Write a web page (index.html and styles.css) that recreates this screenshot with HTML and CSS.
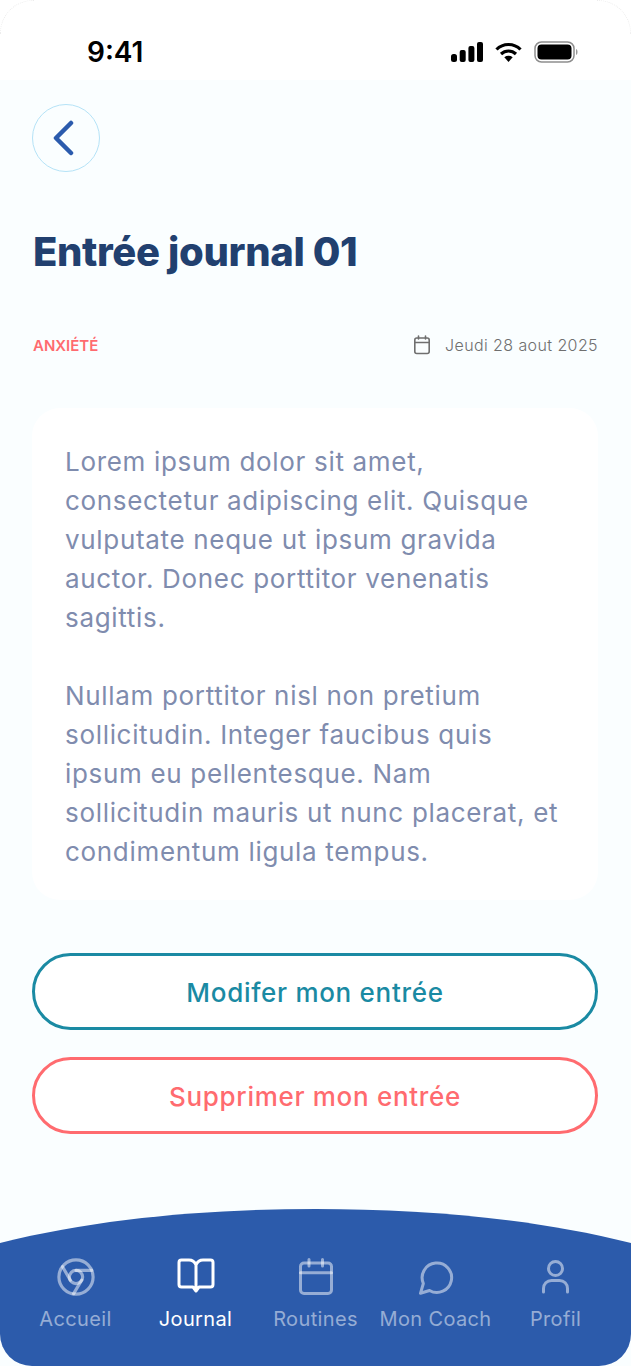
FILE: index.html
```html
<!DOCTYPE html>
<html lang="fr">
<head>
    <meta charset="UTF-8">
    <meta name="viewport" content="width=device-width, initial-scale=1.0">
    <title>Entrée journal 01</title>
    <link rel="stylesheet" href="styles.css">
</head>
<body>
    <div class="phone">
        <div class="status-bar">
            <span class="clock">9:41</span>
            <div class="status-icons">
                <svg width="32" height="20" viewBox="0 0 32 20"><g fill="#000"><rect x="0" y="12" width="6" height="8" rx="2.500"/><rect x="8.700" y="8" width="6" height="12" rx="2"/><rect x="17.400" y="4" width="6" height="16" rx="2"/><rect x="26" y="0" width="6" height="20" rx="2"/></g></svg>
                <svg width="27" height="20" viewBox="0 0 27 20"><path d="M1.500 7.500C8 .8 19 .8 25.500 7.500M6 12c4.300-4 10.700-4 15 0" fill="none" stroke="#000" stroke-width="3.200"/><path d="M9.300 15.200c2.500-1.800 5.900-1.800 8.400 0L13.500 20z" fill="#000"/></svg>
                <svg width="44" height="22" viewBox="0 0 44 22"><rect x="1" y="1" width="39" height="20" rx="6.500" fill="none" stroke="#8e8e8e" stroke-width="1.500"/><rect x="3.500" y="3.500" width="34" height="15" rx="4" fill="#000"/><path d="M42 8c2 .5 2 5.500 0 6z" fill="#999"/></svg>
            </div>
        </div>

        <main class="content">
            <button class="back-button" aria-label="Retour">
                <svg width="24" height="36" viewBox="0 0 24 36"><path d="M20 3L5 18l15 15" fill="none" stroke="#2b5bad" stroke-width="4.500" stroke-linecap="round" stroke-linejoin="round"/></svg>
            </button>

            <h1 class="title">Entrée journal 01</h1>

            <div class="meta">
                <span class="tag">ANXIÉTÉ</span>
                <span class="date">
                    <svg width="18" height="20" viewBox="0 0 18 20"><g fill="none" stroke="#6f6f6f" stroke-width="1.600" stroke-linecap="round"><rect x="1.800" y="3" width="14.400" height="15.500" rx="2"/><path d="M1.800 7.500h14.400M5.500 1v3M12.500 1v3"/></g></svg>
                    Jeudi 28 aout 2025
                </span>
            </div>

            <article class="entry">
                <p>Lorem ipsum dolor sit amet,<br>consectetur adipiscing elit. Quisque<br>vulputate neque ut ipsum gravida<br>auctor. Donec porttitor venenatis<br>sagittis.</p>
                <p>Nullam porttitor nisl non pretium<br>sollicitudin. Integer faucibus quis<br>ipsum eu pellentesque. Nam<br>sollicitudin mauris ut nunc placerat, et<br>condimentum ligula tempus.</p>
            </article>

            <div class="actions">
                <button class="btn btn-edit">Modifer mon entrée</button>
                <button class="btn btn-delete">Supprimer mon entrée</button>
            </div>
        </main>

        <nav class="tabbar">
            <svg class="tabbar-curve" width="631" height="36" viewBox="0 0 631 36" preserveAspectRatio="none"><path d="M0 34C100 9 210 0 316 0s216 9 315 34v2H0z" fill="#2c5bab"/></svg>
            <div class="tabs">
                <a class="tab">
                    <svg width="38" height="38" viewBox="0 0 24 24"><g fill="none" stroke="currentColor" stroke-width="2" stroke-linecap="round"><circle cx="12" cy="12" r="10.800"/><circle cx="12" cy="12" r="4.200"/><path d="M22 7.800H12M3.500 5.500L8.400 14M10.500 22.500L15.600 14"/></g></svg>
                    <span>Accueil</span>
                </a>
                <a class="tab tab-active">
                    <svg width="38" height="38" viewBox="0 0 38 38"><path d="M19 7C17.500 3.500 15 2 12 2H4.500C3 2 2 3 2 4.500v22C2 28 3 29 4.500 29H16l3 4 3-4h11.500c1.500 0 2.500-1 2.500-2.500v-22C36 3 35 2 33.500 2H26c-3 0-5.500 1.500-7 5zM19 7v24" fill="none" stroke="currentColor" stroke-width="3" stroke-linecap="round" stroke-linejoin="round"/></svg>
                    <span>Journal</span>
                </a>
                <a class="tab">
                    <svg width="38" height="38" viewBox="0 0 38 38"><g fill="none" stroke="currentColor" stroke-width="3" stroke-linecap="round"><rect x="3.500" y="5" width="31" height="30.500" rx="3.500"/><path d="M3.500 14.700h31M12 1.500v6.500M25.500 1.500v6.500"/></g></svg>
                    <span>Routines</span>
                </a>
                <a class="tab">
                    <svg width="38" height="38" viewBox="0 0 24 24"><path d="M7.900 20.500A9.300 9.300 0 1 0 4 16.100L2.200 22.300Z" fill="none" stroke="currentColor" stroke-width="1.900" stroke-linejoin="round"/></svg>
                    <span>Mon Coach</span>
                </a>
                <a class="tab">
                    <svg width="38" height="38" viewBox="0 0 38 38"><g fill="none" stroke="currentColor" stroke-width="3" stroke-linecap="round"><circle cx="18.500" cy="10.500" r="7"/><path d="M6.500 34v-3.500c0-4.500 3.500-8 8-8h8c4.500 0 8 3.500 8 8V34"/></g></svg>
                    <span>Profil</span>
                </a>
            </div>
        </nav>
    </div>
</body>
</html>
```

FILE: styles.css
```css
* {
    box-sizing: border-box;
}

body {
    margin: 0;
    background-color: #fff;
    font-family: Inter, "Open Sans", Arial, sans-serif;
}

.phone {
    position: relative;
    display: flex;
    flex-direction: column;
    width: 631px;
    height: 1366px;
    overflow: hidden;
    background-color: #fafeff;
}

/* faint dotted edge of the device at the top corners */
.phone::before,
.phone::after {
    content: "";
    position: absolute;
    top: 0;
    width: 33px;
    height: 33px;
    border-top: 1px dotted #ececec;
}

.phone::before {
    left: 0;
    border-left: 1px dotted #ececec;
    border-top-left-radius: 33px;
}

.phone::after {
    right: 0;
    border-right: 1px dotted #ececec;
    border-top-right-radius: 33px;
}

.status-bar {
    display: flex;
    justify-content: space-between;
    align-items: center;
    height: 80px;
    padding: 24px 53px 0 87px;
    background-color: #fff;
}

.clock {
    font-size: 28px;
    font-weight: 600;
    color: #000;
}

.status-icons {
    display: flex;
    align-items: center;
    gap: 12px;
}

.content {
    flex: 1;
    padding: 24px 33px 0 32px;
}

.back-button {
    display: flex;
    justify-content: center;
    align-items: center;
    width: 68px;
    height: 68px;
    padding: 0 6px 0 0;
    background: none;
    border: 1px solid #b5e3f7;
    border-radius: 50%;
}

.title {
    margin: 53px 0 0 1px;
    font-size: 40px;
    line-height: 54px;
    font-weight: 800;
    color: #21406f;
    letter-spacing: -0.35px;
}

.meta {
    display: flex;
    justify-content: space-between;
    align-items: center;
    height: 28px;
    margin: 52px 0 0 1px;
}

.tag {
    font-size: 15px;
    font-weight: 600;
    color: #ff6b6f;
}

.date {
    display: flex;
    align-items: center;
    gap: 14px;
    font-size: 16px;
    font-weight: 300;
    letter-spacing: 0.4px;
    color: #6f6f6f;
}

.entry {
    height: 492px;
    margin-top: 49px;
    padding: 34px 33px 0;
    background-color: #fff;
    border-radius: 28px;
}

.entry p {
    margin: 0 0 39px;
    font-size: 26px;
    line-height: 39px;
    letter-spacing: 0.68px;
    color: #7f8cae;
}

.actions {
    display: flex;
    flex-direction: column;
    gap: 27px;
    margin-top: 53px;
}

.btn {
    height: 77px;
    padding-top: 2px;
    font-family: inherit;
    font-size: 26px;
    font-weight: 500;
    letter-spacing: 0.7px;
    background-color: #fff;
    border-radius: 39px;
}

.btn-edit {
    color: #1a8aa3;
    border: 3px solid #1a8aa3;
}

.btn-delete {
    color: #ff6b6f;
    border: 3px solid #ff6b6f;
}

.tabbar {
    position: relative;
    height: 122px;
    padding-top: 14px;
    background-color: #2c5bab;
    border-radius: 0 0 32px 32px;
}

/* the arc sits above the bar */
.tabbar-curve {
    position: absolute;
    left: 0;
    bottom: 100%;
    display: block;
    margin-bottom: -1px;
}

.tabs {
    display: flex;
    justify-content: center;
}

.tab {
    display: flex;
    flex-direction: column;
    align-items: center;
    width: 120px;
    gap: 11px;
    font-size: 20px;
    letter-spacing: 0.35px;
    white-space: nowrap;
    color: rgba(255, 255, 255, 0.5);
}

.tab-active {
    color: #fff;
}
```
